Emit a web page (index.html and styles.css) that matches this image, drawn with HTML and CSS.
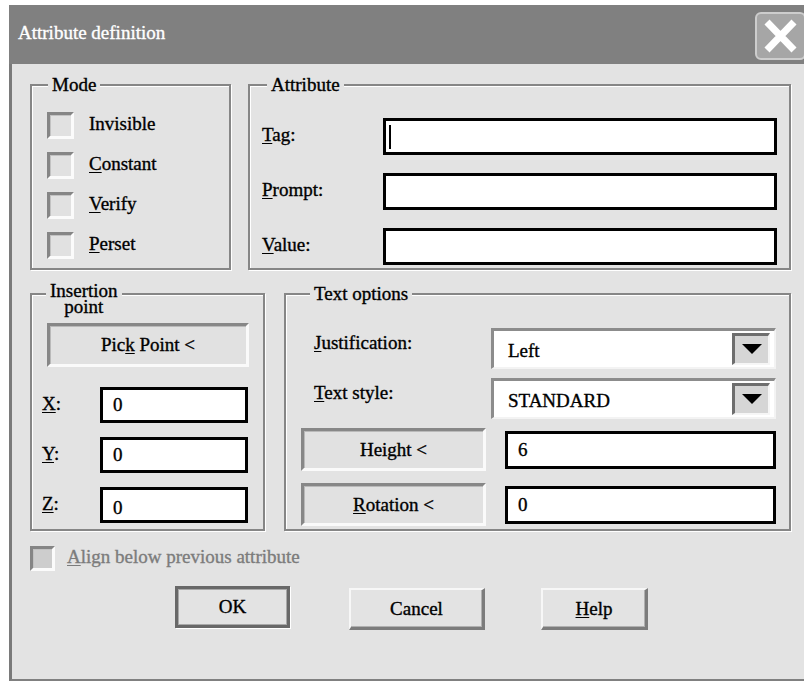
FILE: index.html
```html
<!DOCTYPE html>
<html lang="en">
<head>
<meta charset="utf-8">
<title>Attribute definition</title>
<link rel="stylesheet" href="styles.css">
</head>
<body>
<div class="window">
  <div class="titlebar">
    <span class="title">Attribute definition</span>
    <button class="close" type="button" aria-label="Close">
      <svg viewBox="0 0 47 44" aria-hidden="true">
        <path d="M10 8 L37 36 M37 8 L10 36" stroke="#fff" stroke-width="7" fill="none"/>
      </svg>
    </button>
  </div>

  <div class="dialog">
    <div class="row row-top">
      <fieldset class="group mode">
        <legend>Mode</legend>
        <div class="group-body mode-body">
          <label class="check"><span class="box"></span><span>Invisible</span></label>
          <label class="check"><span class="box"></span><span><u>C</u>onstant</span></label>
          <label class="check"><span class="box"></span><span><u>V</u>erify</span></label>
          <label class="check"><span class="box"></span><span><u>P</u>erset</span></label>
        </div>
      </fieldset>

      <fieldset class="group attribute">
        <legend>Attribute</legend>
        <div class="group-body attr-body">
          <div class="field"><span class="field-label"><u>T</u>ag:</span><div class="textbox"><span class="caret"></span></div></div>
          <div class="field"><span class="field-label"><u>P</u>rompt:</span><div class="textbox"></div></div>
          <div class="field"><span class="field-label"><u>V</u>alue:</span><div class="textbox"></div></div>
        </div>
      </fieldset>
    </div>

    <div class="row row-mid">
      <fieldset class="group insertion">
        <legend><span class="legend-lines">Insertion<br>point</span></legend>
        <div class="group-body ins-body">
          <div class="push pick"><span>Pic<u>k</u> Point &lt;</span></div>
          <div class="coords">
            <div class="coord"><span class="coord-label"><u>X</u>:</span><div class="textbox small">0</div></div>
            <div class="coord"><span class="coord-label"><u>Y</u>:</span><div class="textbox small">0</div></div>
            <div class="coord"><span class="coord-label"><u>Z</u>:</span><div class="textbox small z">0</div></div>
          </div>
        </div>
      </fieldset>

      <fieldset class="group textopts">
        <legend>Text options</legend>
        <div class="group-body text-body">
          <div class="opt">
            <span class="opt-label"><u>J</u>ustification:</span>
            <div class="combo"><span class="combo-value">Left</span><span class="combo-arrow"></span></div>
          </div>
          <div class="opt">
            <span class="opt-label"><u>T</u>ext style:</span>
            <div class="combo"><span class="combo-value">STANDARD</span><span class="combo-arrow"></span></div>
          </div>
          <div class="opt">
            <div class="push opt-btn"><span>Height &lt;</span></div>
            <div class="textbox opt-input">6</div>
          </div>
          <div class="opt last">
            <div class="push opt-btn"><span><u>R</u>otation &lt;</span></div>
            <div class="textbox opt-input">0</div>
          </div>
        </div>
      </fieldset>
    </div>

    <label class="check disabled align"><span class="box"></span><span><u>A</u>lign below previous attribute</span></label>

    <div class="buttons">
      <button class="btn btn-default" type="button">OK</button>
      <button class="btn btn-cancel" type="button">Cancel</button>
      <button class="btn btn-help" type="button"><u>H</u>elp</button>
    </div>
  </div>
</div>
</body>
</html>
```

FILE: styles.css
```css
html, body {
  margin: 0;
  padding: 0;
  background: #fff;
  overflow: hidden;
}

body {
  font-family: "Liberation Serif", "Tinos", "Times New Roman", "DejaVu Serif", serif;
  font-size: 19px;
  color: #000;
  -webkit-text-stroke: 0.35px currentColor;
}

u { text-decoration-thickness: 1px; text-underline-offset: 2px; }

/* window frame */
.window {
  margin: 5px 0 0 9px;
  width: 797px;
}

.titlebar {
  height: 59px;
  background: #808080;
  display: flex;
  justify-content: space-between;
  align-items: center;
}

.title {
  color: #fff;
  padding-left: 9px;
  margin-top: -3px;
}

.close {
  width: 51px;
  height: 48px;
  align-self: flex-start;
  margin-top: 7px;
  box-sizing: border-box;
  border: 2px solid #cdcdcd;
  border-radius: 6px;
  background: #a6a6a6;
  padding: 0;
  display: flex;
}

.close svg { display: block; width: 100%; height: 100%; }

.dialog {
  height: 617px;
  box-sizing: border-box;
  background: #e3e3e3;
  border-left: 3px solid #7a7a7a;
  border-bottom: 2px solid #808080;
  padding: 10px 0 0 18px;
}

/* group boxes */
.row { display: flex; width: 761px; }
.row-top { gap: 17px; height: 196px; }
.row-mid { gap: 19px; height: 248px; margin-top: 13px; }

.group {
  margin: 0;
  padding: 0;
  border: 2px solid #868686;
  box-shadow: inset 1px 1px 0 #fff, 1px 1px 0 #fff;
  box-sizing: border-box;
  min-width: 0;
}

.group legend {
  padding: 0 4px;
  line-height: 22px;
  background: #e3e3e3;
}

.mode { width: 201px; }
.mode legend { margin-left: 16px; }
.attribute { width: 543px; }
.attribute legend { margin-left: 17px; }
.insertion { width: 235px; }
.insertion legend { margin-left: 14px; }
.textopts { width: 507px; }
.textopts legend { margin-left: 24px; }

.legend-lines {
  display: block;
  text-align: center;
  line-height: 16px;
  margin-bottom: -10px;
}

/* check boxes */
.mode-body {
  padding: 16px 0 0 15px;
  display: flex;
  flex-direction: column;
  gap: 13px;
}

.check {
  display: flex;
  align-items: center;
  gap: 15px;
  height: 27px;
}

.check > span:last-child { margin-top: -4px; }

.check .box {
  width: 27px;
  height: 27px;
  box-sizing: border-box;
  border: 3px solid;
  border-color: #858585 #fbfbfb #fbfbfb #858585;
  background: #e1e1e1;
  box-shadow: inset 1px 1px 0 #c2c2c2;
}

.check.disabled { color: #7c7c7c; }
.check.disabled .box { background: #cdcdcd; }

.align {
  margin-top: 15px;
  height: 25px;
  gap: 12px;
}

.align .box { width: 25px; height: 25px; }

/* edit boxes */
.textbox {
  box-sizing: border-box;
  border: 3px solid #000;
  background: #fff;
  display: flex;
  align-items: center;
  padding-left: 10px;
}

.caret {
  width: 2px;
  height: 24px;
  background: #000;
  margin-left: -7px;
}

.attr-body {
  padding: 22px 12px 0 12px;
  display: flex;
  flex-direction: column;
  gap: 18px;
}

.field { display: flex; align-items: center; }
.field-label { width: 121px; margin-top: -3px; }
.field .textbox { width: 394px; height: 37px; }

/* sunken push buttons */
.push {
  box-sizing: border-box;
  border: 3px solid;
  border-color: #878787 #fafafa #fafafa #878787;
  box-shadow: inset 1px 1px 0 #b9b9b9;
  background: #e1e1e1;
  display: flex;
  align-items: center;
  justify-content: center;
}

.ins-body { padding: 18px 0 0 10px; }

.pick {
  width: 202px;
  height: 44px;
  margin-left: 5px;
}

.coords {
  margin-top: 20px;
  display: flex;
  flex-direction: column;
  gap: 14px;
}

.coord { display: flex; align-items: center; }
.coord-label { width: 58px; margin-top: -3px; }
.textbox.small { width: 148px; height: 36px; }
.textbox.z { padding-top: 6px; }

/* text options */
.text-body {
  padding: 23px 13px 0 15px;
  display: flex;
  flex-direction: column;
  gap: 9px;
}

.opt { display: flex; align-items: center; }
.opt.last { margin-top: 3px; }
.opt-label { margin-left: 13px; margin-top: -12px; }

.combo {
  margin-left: auto;
  width: 285px;
  height: 41px;
  box-sizing: border-box;
  border: 3px solid;
  border-color: #8c8c8c #f3f3f3 #f3f3f3 #8c8c8c;
  border-width: 3px 2px 2px 3px;
  background: #fff;
  display: flex;
  align-items: center;
  justify-content: space-between;
  padding: 2px 4px 3px 14px;
}

.combo-value { margin-top: 4px; }

.combo-arrow {
  width: 38px;
  height: 32px;
  box-sizing: border-box;
  border: 3px solid;
  border-color: #6e6e6e #f6f6f6 #f6f6f6 #6e6e6e;
  border-width: 3px 2px 2px 3px;
  background: #d6d6d6;
  display: flex;
  align-items: center;
  justify-content: center;
}

.combo-arrow::after {
  content: "";
  width: 0;
  height: 0;
  border-left: 10px solid transparent;
  border-right: 10px solid transparent;
  border-top: 10px solid #000;
}

.opt-btn { width: 185px; height: 43px; }
.opt-input { margin-left: auto; width: 271px; height: 38px; }

/* dialog buttons */
.buttons {
  margin-top: 15px;
  display: flex;
  align-items: flex-start;
}

.btn {
  font: inherit;
  color: #000;
  -webkit-text-stroke: 0.35px currentColor;
  box-sizing: border-box;
  height: 42px;
  padding: 0;
  background: #e3e3e3;
  border: 3px solid;
  border-color: #f7f7f7 #7c7c7c #7c7c7c #f7f7f7;
  border-width: 2px 3px 3px 2px;
  box-shadow: inset -1px -1px 0 #b0b0b0;
}

.btn-default {
  margin-left: 145px;
  width: 115px;
  border: 3px solid #686868;
  box-shadow: inset 1px 1px 0 #a8a8a8, inset -1px -1px 0 #a8a8a8, 1px 1px 0 #fff;
}

.btn-cancel { margin-left: 59px; margin-top: 2px; width: 136px; }
.btn-help { margin-left: 56px; margin-top: 2px; width: 107px; }
```
